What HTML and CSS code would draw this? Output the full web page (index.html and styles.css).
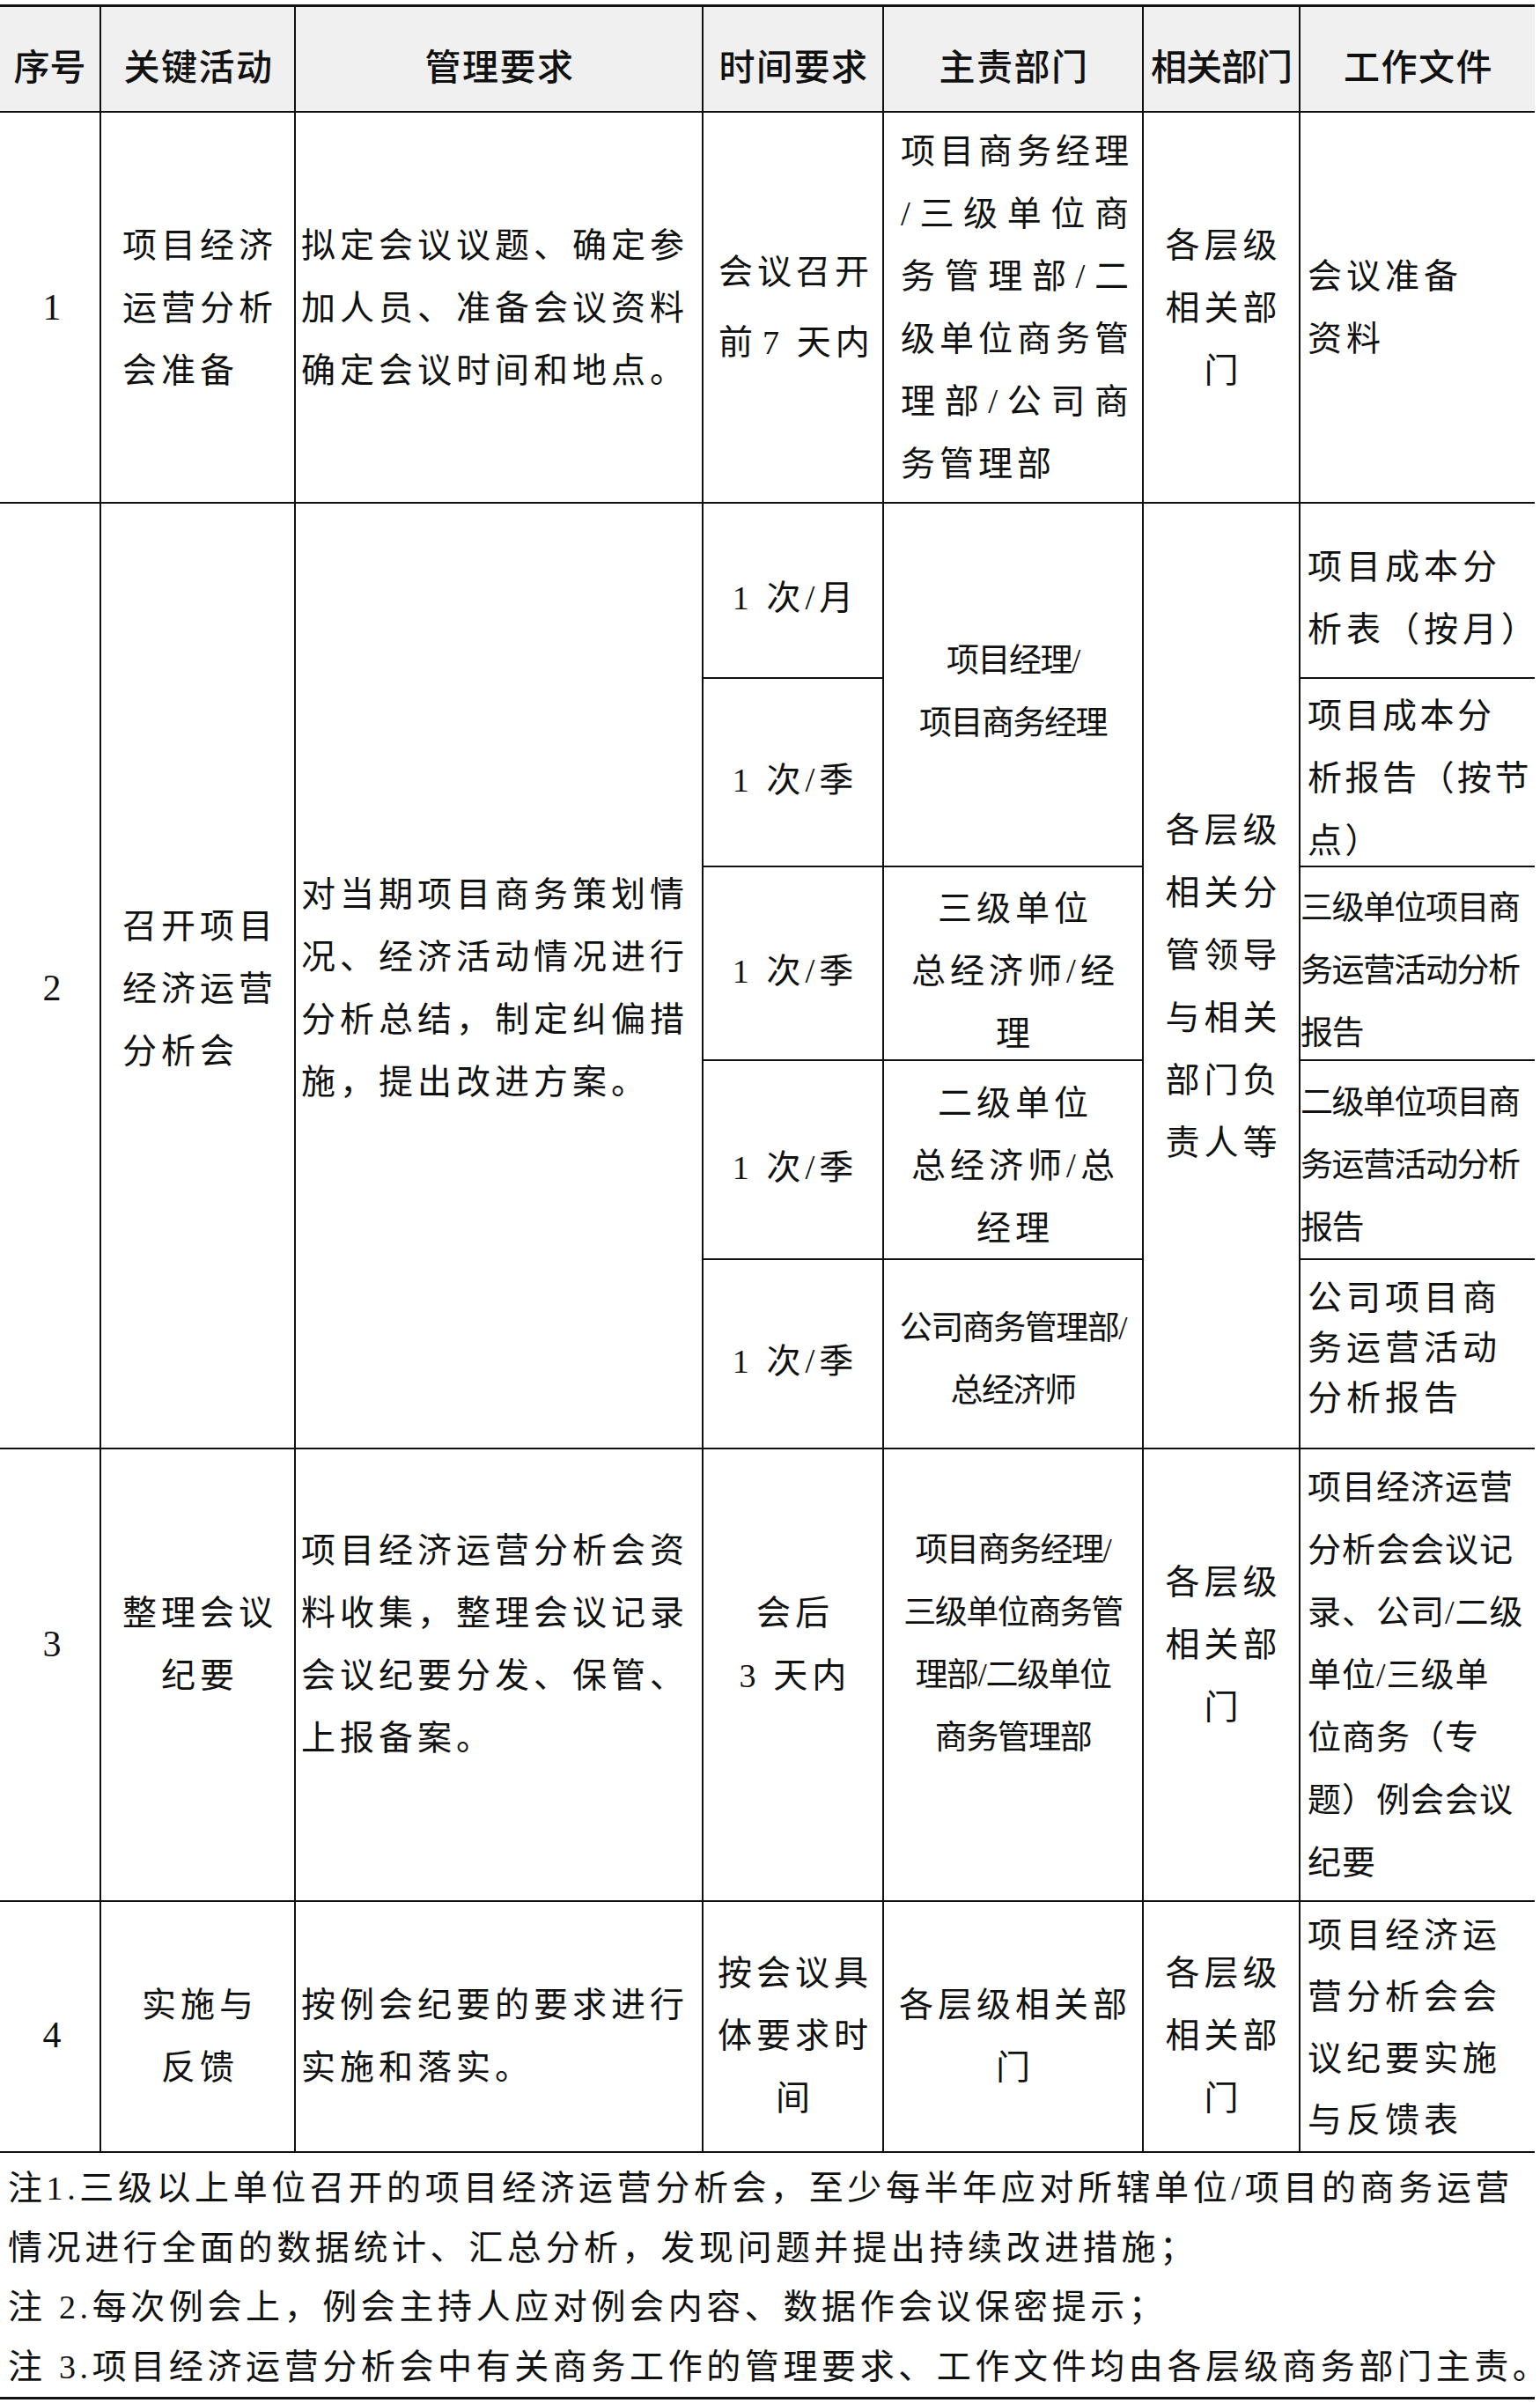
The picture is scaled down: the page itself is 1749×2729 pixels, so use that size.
FILE: index.html
```html
<!DOCTYPE html>
<html lang="zh-CN">
<head>
<meta charset="utf-8">
<title>项目经济运营分析会</title>
<link rel="stylesheet" href="styles.css">
</head>
<body>
<div class="sheet">
  <div class="grid">
    <!-- header -->
    <div class="cell hd k1 hd-narrow"><p>序号</p></div>
    <div class="cell hd k2"><p>关键活动</p></div>
    <div class="cell hd k3"><p>管理要求</p></div>
    <div class="cell hd k4"><p>时间要求</p></div>
    <div class="cell hd k5"><p>主责部门</p></div>
    <div class="cell hd k6 hd-tight"><p>相关部门</p></div>
    <div class="cell hd k7"><p>工作文件</p></div>

    <!-- row 1 -->
    <div class="cell k1 center"><p class="no">1</p></div>
    <div class="cell k2 left pad-act"><p>项目经济<br>运营分析<br>会准备</p></div>
    <div class="cell k3 left pad-req"><p>拟定会议议题、确定参<br>加人员、准备会议资料<br>确定会议时间和地点。</p></div>
    <div class="cell k4 left pad-time tall-lines"><p>会议召开<br>前<span class="n gap">7</span> 天内</p></div>
    <div class="cell k5 justified"><p><span class="jl">项目商务经理</span><span class="jl">/三级单位商</span><span class="jl">务管理部/二</span><span class="jl">级单位商务管</span><span class="jl">理部/公司商</span><span class="ll">务管理部</span></p></div>
    <div class="cell k6 center"><p>各层级<br>相关部<br>门</p></div>
    <div class="cell k7 left pad-doc"><p>会议准备<br>资料</p></div>

    <!-- row 2 -->
    <div class="cell k1 span5 center nudge-l"><p class="no">2</p></div>
    <div class="cell k2 span5 left pad-act nudge-l"><p>召开项目<br>经济运营<br>分析会</p></div>
    <div class="cell k3 span5 left pad-req nudge-l"><p>对当期项目商务策划情<br>况、经济活动情况进行<br>分析总结，制定纠偏措<br>施，提出改进方案。</p></div>
    <div class="cell k4 center nudge-m"><p><span class="n">1</span> 次/月</p></div>
    <div class="cell k5 span2 center cond nudge-m"><p>项目经理/<br>项目商务经理</p></div>
    <div class="cell k6 span5 center nudge-xl"><p>各层级<br>相关分<br>管领导<br>与相关<br>部门负<br>责人等</p></div>
    <div class="cell k7 left pad-doc nudge-m"><p>项目成本分<br>析表（按月）</p></div>

    <div class="cell k4 center nudge-m"><p><span class="n">1</span> 次/季</p></div>
    <div class="cell k7 left pad-doc snug nudge-s"><p>项目成本分<br>析报告（按节<br>点）</p></div>

    <div class="cell k4 center nudge-m"><p><span class="n">1</span> 次/季</p></div>
    <div class="cell k5 center nudge-m"><p>三级单位<br>总经济师/经<br>理</p></div>
    <div class="cell k7 left pad-doc cond nudge-m"><p>三级单位项目商<br>务运营活动分析<br>报告</p></div>

    <div class="cell k4 center nudge-m"><p><span class="n">1</span> 次/季</p></div>
    <div class="cell k5 center nudge-s"><p>二级单位<br>总经济师/总<br>经理</p></div>
    <div class="cell k7 left pad-doc cond nudge-s"><p>二级单位项目商<br>务运营活动分析<br>报告</p></div>

    <div class="cell k4 center nudge-m"><p><span class="n">1</span> 次/季</p></div>
    <div class="cell k5 center cond nudge-s"><p>公司商务管理部/<br>总经济师</p></div>
    <div class="cell k7 left pad-doc short-lines lift-s"><p>公司项目商<br>务运营活动<br>分析报告</p></div>

    <!-- row 3 -->
    <div class="cell k1 center lift-l"><p class="no">3</p></div>
    <div class="cell k2 center lift-l"><p>整理会议<br>纪要</p></div>
    <div class="cell k3 left pad-req lift-l"><p>项目经济运营分析会资<br>料收集，整理会议记录<br>会议纪要分发、保管、<br>上报备案。</p></div>
    <div class="cell k4 center lift-l"><p>会后<br><span class="n">3</span> 天内</p></div>
    <div class="cell k5 center cond lift-l"><p>项目商务经理/<br>三级单位商务管<br>理部/二级单位<br>商务管理部</p></div>
    <div class="cell k6 center lift-l"><p>各层级<br>相关部<br>门</p></div>
    <div class="cell k7 left pad-doc semi"><p>项目经济运营<br>分析会会议记<br>录、公司/二级<br>单位/三级单<br>位商务（专<br>题）例会会议<br>纪要</p></div>

    <!-- row 4 -->
    <div class="cell k1 center nudge-l2"><p class="no">4</p></div>
    <div class="cell k2 center nudge-l2"><p>实施与<br>反馈</p></div>
    <div class="cell k3 left pad-req nudge-l2"><p>按例会纪要的要求进行<br>实施和落实。</p></div>
    <div class="cell k4 center nudge-l2"><p>按会议具<br>体要求时<br>间</p></div>
    <div class="cell k5 center nudge-l2"><p>各层级相关部<br>门</p></div>
    <div class="cell k6 center nudge-l2"><p>各层级<br>相关部<br>门</p></div>
    <div class="cell k7 left pad-doc fit-lines"><p>项目经济运<br>营分析会会<br>议纪要实施<br>与反馈表</p></div>

    <!-- notes -->
    <div class="cell notes"><p>注<span class="n">1.</span>三级以上单位召开的项目经济运营分析会，至少每半年应对所辖单位/项目的商务运营<br>情况进行全面的数据统计、汇总分析，发现问题并提出持续改进措施；<br>注 <span class="n">2.</span>每次例会上，例会主持人应对例会内容、数据作会议保密提示；<br>注 <span class="n">3.</span>项目经济运营分析会中有关商务工作的管理要求、工作文件均由各层级商务部门主责。</p></div>
  </div>
</div>
</body>
</html>
```

FILE: styles.css
```css
html, body {
  margin: 0;
  padding: 0;
  background: #ffffff;
}

body {
  width: 1749px;
}

.sheet {
  padding-top: 5px;
}

.grid {
  display: grid;
  width: 1743px;
  grid-template-columns: 115px 221px 463px 205px 295px 178px 266px;
  grid-template-rows: 120px 444px 199px 214px 220px 226px 215px 514px 285px 280px;
  border-top: 3px solid #111;
  font-family: "Liberation Serif", "Noto Sans CJK SC", serif;
  font-size: 39px;
  font-weight: 400;
  color: #111;
  line-height: 71px;
  letter-spacing: 5px;
}

.cell {
  box-sizing: border-box;
  border-right: 2px solid #111;
  border-bottom: 2px solid #111;
  display: flex;
  flex-direction: column;
  justify-content: center;
  white-space: nowrap;
  min-width: 0;
  min-height: 0;
}

.cell p {
  margin: 0;
}

/* columns */
.k1 { grid-column: 1; }
.k2 { grid-column: 2; }
.k3 { grid-column: 3; }
.k4 { grid-column: 4; }
.k5 { grid-column: 5; }
.k6 { grid-column: 6; }
.k7 { grid-column: 7; border-right: none; }

.span5 { grid-row: span 5; }
.span2 { grid-row: span 2; }

/* header */
.hd {
  background: #f0f0f0;
  font-family: "Noto Sans CJK SC", sans-serif;
  font-weight: 500;
  font-size: 41px;
  line-height: 52px;
  letter-spacing: 1.5px;
  text-align: center;
  padding-top: 12px;
  padding-left: 2px;
}

.hd-narrow {
  letter-spacing: 0;
  padding-left: 0;
}

.hd-tight {
  letter-spacing: -1px;
  padding-left: 0;
}

/* alignment */
.center {
  text-align: center;
  padding-left: 5px;
}

.left {
  text-align: left;
}

.pad-act { padding-left: 24px; }
.pad-req { padding-left: 6px; }
.pad-time { padding-left: 17px; }
.pad-doc { padding-left: 8px; }

.cond {
  font-size: 37px;
  letter-spacing: -1.5px;
  padding-left: 0;
}

.semi {
  font-size: 38px;
  letter-spacing: 1px;
}

.snug {
  letter-spacing: 3.5px;
}

.tall-lines { line-height: 80px; }
.short-lines { line-height: 57px; }

.fit-lines {
  line-height: 70px;
  padding-top: 2px;
}

/* justified multi-line block (主责部门, row 1) */
.justified {
  padding-left: 19px;
  padding-right: 10px;
}

.justified .jl {
  display: block;
  text-align: justify;
  text-align-last: justify;
}

.justified .ll {
  display: block;
  text-align: left;
}

/* numbers */
.no {
  font-size: 42px;
  letter-spacing: 0;
}

.n {
  font-size: 38px;
}

.gap {
  margin-left: 6px;
}

/* vertical nudges to follow the reference placement */
.nudge-s  { padding-top: 13px; }
.nudge-m  { padding-top: 17px; }
.nudge-l2 { padding-top: 20px; }
.nudge-xl { padding-top: 24px; }
.nudge-l  { padding-top: 28px; }
.lift-s   { padding-bottom: 14px; }
.lift-l   { padding-bottom: 70px; }

/* notes */
.notes {
  grid-column: 1 / -1;
  border-right: none;
  border-bottom: 3px solid #111;
  display: block;
  padding-top: 6px;
  padding-left: 9px;
  line-height: 67px;
  letter-spacing: 4.6px;
}

.notes .n {
  font-size: 38px;
}
```
